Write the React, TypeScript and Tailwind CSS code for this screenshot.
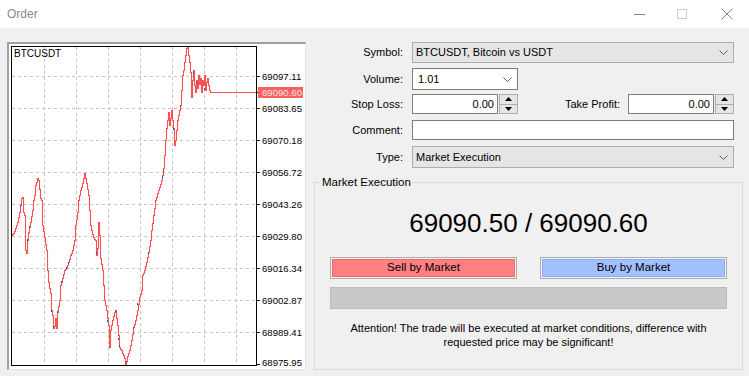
import React from 'react';

const keyPoints: [number, number][] = [
  [11, 235], [13, 233], [15, 228], [17, 222], [19, 212], [21, 198], [22, 197], [23, 212], [24, 215], [25, 250],
  [26, 253], [27, 240], [28, 232], [30, 222], [32, 210], [33, 200], [34, 195], [35, 185], [37, 178], [38, 180],
  [40, 198], [41, 200], [42, 225], [44, 237], [46, 250], [47, 270], [48, 282], [50, 293], [51, 310], [52, 315],
  [53, 328], [54, 326], [55, 318], [56, 328], [57, 312], [59, 300], [60, 285], [62, 278], [64, 270], [66, 268],
  [68, 262], [70, 255], [72, 250], [74, 240], [75, 225], [77, 212], [78, 200], [80, 190], [82, 183], [84, 173],
  [86, 183], [88, 195], [89, 210], [90, 225], [91, 230], [93, 237], [95, 240], [96, 255], [97, 248], [98, 222],
  [99, 235], [100, 258], [102, 270], [104, 300], [105, 305], [106, 310], [108, 325], [109, 347], [110, 330],
  [112, 320], [114, 312], [115, 310], [117, 325], [118, 335], [119, 347], [121, 350], [123, 355], [124, 358],
  [125, 365], [127, 356], [129, 350], [131, 340], [133, 327], [135, 320], [137, 310], [139, 297], [141, 290],
  [142, 275], [144, 270], [146, 262], [148, 252], [150, 240], [151, 230], [153, 215], [155, 200], [157, 193],
  [159, 187], [161, 180], [162, 175], [163, 168], [164, 155], [165, 140], [166, 128], [167, 120], [168, 112],
  [169, 125], [170, 118], [171, 110], [172, 120], [173, 128], [174, 145], [175, 140], [176, 130], [177, 120],
  [179, 110], [180, 105], [181, 90], [182, 75], [183, 70], [184, 62], [185, 55], [186, 48], [187, 46], [188, 55],
  [189, 62], [190, 72], [191, 97], [192, 80], [193, 70], [194, 85], [195, 92], [196, 80], [197, 88], [198, 75],
  [199, 84], [200, 78], [201, 92], [202, 80], [203, 85], [204, 75], [205, 90], [206, 82], [207, 78], [208, 85],
  [209, 90], [210, 92], [256, 92],
];

function buildPath() {
  let d = `M${keyPoints[0][0]} ${keyPoints[0][1]}`;
  for (let i = 1; i < keyPoints.length; i++) {
    const [x0, y0] = keyPoints[i - 1];
    const [x1, y1] = keyPoints[i];
    if (x1 - x0 > 3 || i === keyPoints.length - 1) {
      d += ` H${x1} V${y1}`;
      continue;
    }
    for (let x = x0 + 1; x <= x1; x++) {
      const t = (x - x0) / (x1 - x0);
      const y = Math.round(y0 + (y1 - y0) * t);
      d += ` H${x} V${y}`;
    }
  }
  return d;
}

const bluePts: [number, number][] = [
  [20, 205], [27, 239], [29, 226], [51, 310], [53, 326], [57, 311], [61, 281], [66, 267], [68, 262], [96, 252],
  [107, 320], [115, 310], [118, 338], [119, 345], [126, 361], [133, 327], [137, 303], [148, 252], [162, 176],
  [163, 170], [173, 128], [180, 105], [193, 72], [196, 82], [204, 88],
];

const labels = [
  { y: 76, t: '69097.11' },
  { y: 108, t: '69083.65' },
  { y: 140, t: '69070.18' },
  { y: 172, t: '69056.72' },
  { y: 204, t: '69043.26' },
  { y: 236, t: '69029.80' },
  { y: 268, t: '69016.34' },
  { y: 300, t: '69002.87' },
  { y: 332, t: '68989.41' },
  { y: 362, t: '68975.95' },
];

const chartFont = "'Liberation Sans', Arial, sans-serif";

function Chart() {
  const hLines = [76, 108, 140, 172, 204, 236, 268, 300, 332];
  const vLines = [44, 76, 108, 140, 172, 204, 236];
  return (
    <svg width="296" height="325" viewBox="9 44 296 325" className="block">
      <rect x="9" y="44" width="296" height="325" fill="#ffffff" />
      {hLines.map((y) => (
        <line key={'h' + y} x1="12" x2="256" y1={y + 0.5} y2={y + 0.5} stroke="#c4c4c4" strokeDasharray="3 3" />
      ))}
      {vLines.map((x) => (
        <line key={'v' + x} x1={x + 0.5} x2={x + 0.5} y1="47" y2="365" stroke="#c4c4c4" strokeDasharray="3 3" />
      ))}
      <path d={buildPath()} fill="none" stroke="#ff5050" strokeWidth="1.1" transform="translate(0.5 0.5)" />
      {bluePts.map(([x, y], i) => (
        <rect key={i} x={x} y={y} width="1" height="2" fill="#2050ff" />
      ))}
      <rect x="11.5" y="46.5" width="245" height="319" fill="none" stroke="#000000" strokeWidth="1" />
      {[...hLines, 364].map((y) => (
        <line key={'t' + y} x1="256" x2="260" y1={y + 0.5} y2={y + 0.5} stroke="#000000" />
      ))}
      <line x1="256" x2="260" y1="92.5" y2="92.5" stroke="#000000" />
      <text x="14" y="57" fontSize="10" fontFamily={chartFont} fill="#000000">
        BTCUSDT
      </text>
      {labels.map((l) => (
        <text key={l.t} x="262" y={l.y + 4} fontSize="9.6" fontFamily={chartFont} fill="#000000">
          {l.t}
        </text>
      ))}
      <rect x="258" y="87" width="45" height="11" fill="#f56262" />
      <text x="262" y="96" fontSize="9.6" fontFamily={chartFont} fill="#ffe0e0">
        69090.60
      </text>
    </svg>
  );
}

function Chevron() {
  return (
    <svg width="9" height="5" viewBox="0 0 9 5" className="block">
      <path d="M0.5 0.5 L4.5 4.5 L8.5 0.5" fill="none" stroke="#606060" strokeWidth="1" />
    </svg>
  );
}

function Spin() {
  return (
    <div className="flex w-[19px] flex-col border border-[#adadad] bg-[#e5e5e5]">
      <div className="flex flex-1 items-center justify-center border-b border-[#adadad]">
        <svg width="7" height="4" viewBox="0 0 7 4">
          <path d="M3.5 0 L7 4 L0 4 Z" fill="#000000" />
        </svg>
      </div>
      <div className="flex flex-1 items-center justify-center">
        <svg width="7" height="4" viewBox="0 0 7 4">
          <path d="M0 0 L7 0 L3.5 4 Z" fill="#000000" />
        </svg>
      </div>
    </div>
  );
}

function Row({ label, className, children }: { label: string; className: string; children: React.ReactNode }) {
  return (
    <div className={'flex items-stretch ' + className}>
      <div className="flex w-[89px] items-center justify-end">{label}</div>
      <div className="ml-[9px] flex w-[322px]">{children}</div>
    </div>
  );
}

export default function App() {
  return (
    <div
      className="flex h-[376px] w-[749px] flex-col overflow-hidden text-[11px] text-black"
      style={{ fontFamily: "'Liberation Sans', Arial, sans-serif" }}
    >
      {/* Title bar */}
      <div className="flex h-[28px] items-center bg-white">
        <span className="ml-[7px] text-[12px] text-[#8a8a8a]">Order</span>
        <div className="ml-auto flex items-center">
          <div className="mr-[32px] h-px w-[11px] bg-[#888888]" />
          <div className="mr-[34px] h-[10px] w-[10px] border border-[#cccccc]" />
          <svg width="12" height="12" viewBox="0 0 12 12" className="mr-[16px]">
            <path d="M0.5 0.5 L11.5 11.5 M11.5 0.5 L0.5 11.5" stroke="#888888" strokeWidth="1" />
          </svg>
        </div>
      </div>

      {/* Body */}
      <div className="flex flex-1 bg-[#f0f0f0] pl-[7px] pt-[14px]">
        {/* Chart panel */}
        <div className="h-[328px] w-[299px] border-b border-l-2 border-r border-t-2 border-b-[#e3e3e3] border-l-[#a0a0a0] border-r-[#e3e3e3] border-t-[#a0a0a0] bg-white">
          <Chart />
        </div>

        {/* Form */}
        <div className="ml-[8px] flex w-[428px] flex-col">
          <Row label="Symbol:" className="h-[21px]">
            <div className="flex flex-1 items-center border border-[#adadad] bg-[#e5e5e5] pl-[3px] pr-[5px]">
              <span>BTCUSDT, Bitcoin vs USDT</span>
              <span className="ml-auto">
                <Chevron />
              </span>
            </div>
          </Row>
          <Row label="Volume:" className="mt-[5px] h-[22px]">
            <div className="flex w-[106px] items-center border border-[#7a7a7a] bg-white pl-[5px] pr-[5px]">
              <span>1.01</span>
              <span className="ml-auto">
                <Chevron />
              </span>
            </div>
          </Row>
          <Row label="Stop Loss:" className="mt-[4px] h-[20px]">
            <div className="flex w-[86px] items-center justify-end border border-[#7a7a7a] bg-white pr-[3px]">0.00</div>
            <div className="ml-px flex">
              <Spin />
            </div>
            <div className="flex flex-1 items-center justify-end pr-[8px]">Take Profit:</div>
            <div className="flex w-[86px] items-center justify-end border border-[#7a7a7a] bg-white pr-[3px]">0.00</div>
            <div className="ml-px flex">
              <Spin />
            </div>
          </Row>
          <Row label="Comment:" className="mt-[6px] h-[20px]">
            <div className="flex-1 border border-[#7a7a7a] bg-white" />
          </Row>
          <Row label="Type:" className="mt-[6px] h-[22px]">
            <div className="flex flex-1 items-center border border-[#adadad] bg-[#e5e5e5] pl-[3px] pr-[5px]">
              <span>Market Execution</span>
              <span className="ml-auto">
                <Chevron />
              </span>
            </div>
          </Row>

          {/* Market Execution group */}
          <div className="relative mt-[14px] flex h-[188px] w-[429px] flex-col border border-[#dcdcdc] px-[15px] pt-[25px]">
            <span className="absolute left-[5px] top-[-8px] bg-[#f0f0f0] px-[2px] text-[11.5px] leading-[14px]">
              Market Execution
            </span>
            <div className="text-center text-[26px] leading-[30px]">69090.50 / 69090.60</div>
            <div className="mt-[19px] flex h-[22px] justify-between">
              <div className="flex w-[187px] border border-[#adadad] bg-[#f4f4f4] p-px">
                <div className="flex flex-1 items-center justify-center border border-[#f06a6a] bg-[#ff8080] text-[11.5px]">
                  Sell by Market
                </div>
              </div>
              <div className="flex w-[187px] border border-[#adadad] bg-[#f4f4f4] p-px">
                <div className="flex flex-1 items-center justify-center border border-[#8aaef0] bg-[#a0c0ff] text-[11.5px]">
                  Buy by Market
                </div>
              </div>
            </div>
            <div className="mt-[8px] h-[22px] border border-[#bcbcbc] bg-[#c9c9c9]" />
            <div className="mt-[12px] text-center text-[11px] leading-[14px]">
              Attention! The trade will be executed at market conditions, difference with
              <br />
              requested price may be significant!
            </div>
          </div>
        </div>
      </div>
    </div>
  );
}
